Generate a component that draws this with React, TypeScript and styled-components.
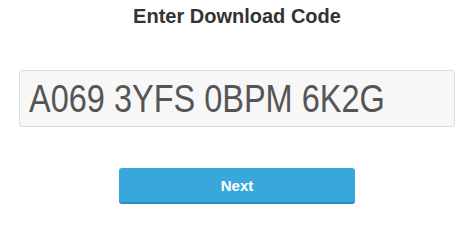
import styled, { createGlobalStyle } from "styled-components";

const GlobalStyle = createGlobalStyle`
  html, body {
    margin: 0;
    padding: 0;
    background: #ffffff;
    font-family: "Liberation Sans", Arial, sans-serif;
  }
`;

const Page = styled.div`
  width: 474px;
  height: 207px;
  display: flex;
  flex-direction: column;
  align-items: center;
  padding-top: 4px;
  box-sizing: border-box;
`;

const Title = styled.h1`
  margin: 0;
  font-size: 20px;
  line-height: 24px;
  font-weight: bold;
  color: #333333;
`;

// code field, text is a narrow sans so it gets squeezed horizontally
const CodeField = styled.div`
  margin-top: 42px;
  width: 436px;
  height: 57px;
  box-sizing: border-box;
  padding: 0 9px;
  display: flex;
  align-items: center;
  border: 1px solid #dddddd;
  border-radius: 3px;
  background: #f7f7f7;
  overflow: hidden;
`;

const CodeText = styled.span`
  display: inline-block;
  font-size: 38px;
  line-height: 1;
  color: #555555;
  white-space: nowrap;
  transform: scaleX(0.855);
  transform-origin: left center;
`;

const NextButton = styled.button`
  margin-top: 41px;
  width: 236px;
  height: 36px;
  border: none;
  border-bottom: 2px solid #2b8cbf;
  border-radius: 3px;
  background: #37a7dc;
  color: #ffffff;
  font-family: "Liberation Sans", Arial, sans-serif;
  font-size: 15px;
  font-weight: bold;
  cursor: pointer;
`;

function App() {
  return (
    <Page>
      <GlobalStyle />
      <Title>Enter Download Code</Title>
      <CodeField>
        <CodeText>A069 3YFS 0BPM 6K2G</CodeText>
      </CodeField>
      <NextButton>Next</NextButton>
    </Page>
  );
}

export default App;
